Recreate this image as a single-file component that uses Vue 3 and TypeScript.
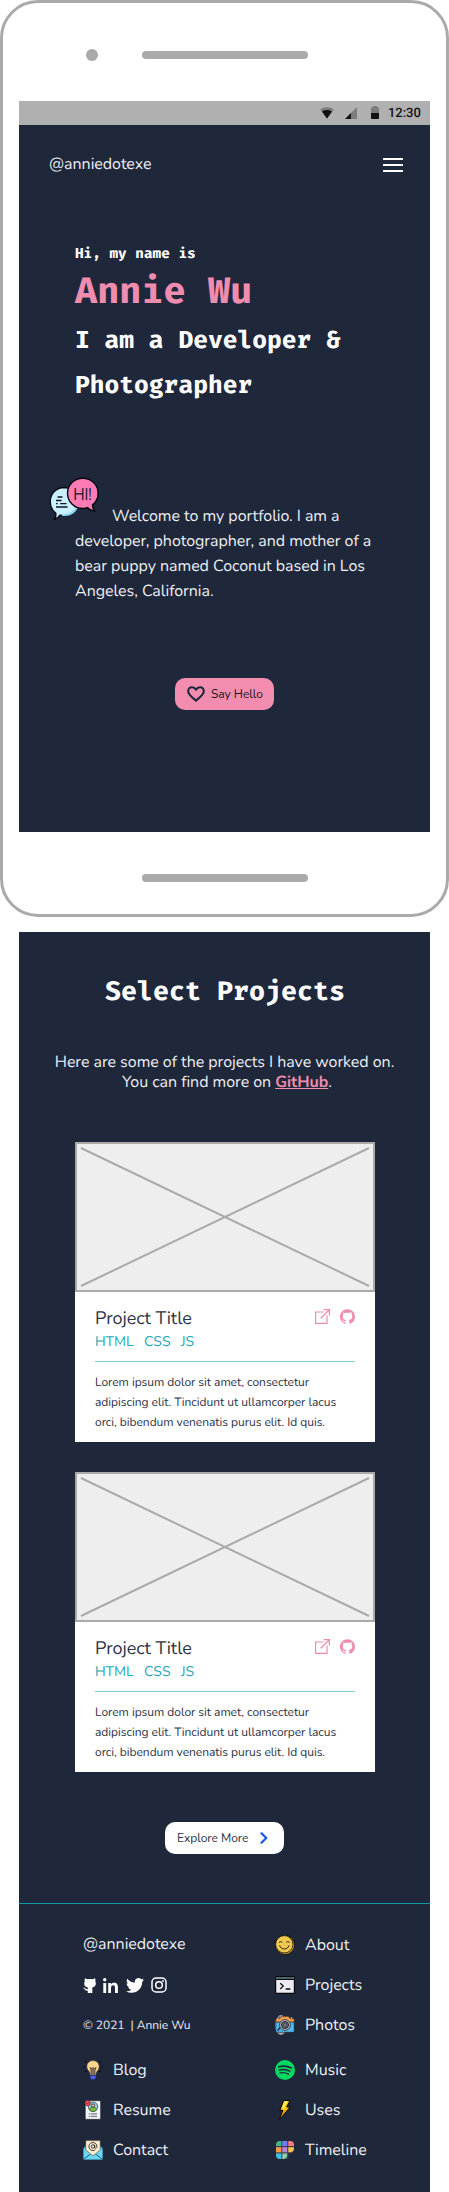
<script setup lang="ts">
interface Project {
  id: number
  title: string
  tags: string[]
  lines: string[]
}

interface FooterLink {
  label: string
  icon: string
}

const lorem = [
  'Lorem ipsum dolor sit amet, consectetur',
  'adipiscing elit. Tincidunt ut ullamcorper lacus',
  'orci, bibendum venenatis purus elit. Id quis.',
]

const projects: Project[] = [1, 2].map((id) => ({
  id,
  title: 'Project Title',
  tags: ['HTML', 'CSS', 'JS'],
  lines: lorem,
}))

const leftLinks: FooterLink[] = [
  { label: 'Blog', icon: 'bulb' },
  { label: 'Resume', icon: 'resume' },
  { label: 'Contact', icon: 'mail' },
]

const rightLinks: FooterLink[] = [
  { label: 'About', icon: 'smile' },
  { label: 'Projects', icon: 'terminal' },
  { label: 'Photos', icon: 'camera' },
  { label: 'Music', icon: 'spotify' },
  { label: 'Uses', icon: 'bolt' },
  { label: 'Timeline', icon: 'grid' },
]

const hour = '12:30'
</script>

<template>
  <div class="page">
    <section class="phone">
      <div class="phone-top">
        <span class="camera"></span>
        <span class="speaker"></span>
      </div>

      <div class="screen">
        <div class="status">
          <svg class="wifi" width="14" height="12" viewBox="0 0 14 12">
            <path d="M0.3 2.6C2.2 1 4.500 .2 7 .2s4.800.8 6.700 2.400L7 11.500z" fill="#7c7c7c" />
            <path d="M1.900 4.600C3.300 3.500 5 2.900 7 2.900s3.700.6 5.100 1.700L7 11.500z" fill="#111" />
          </svg>
          <svg class="signal" width="12" height="12" viewBox="0 0 12 12">
            <path d="M12 0v12H0z" fill="#7c7c7c" />
            <path d="M6 6v6H0z" fill="#111" />
          </svg>
          <svg class="battery" width="8" height="13" viewBox="0 0 8 13">
            <path d="M2 0h4v1.200h2V7H0V1.200h2z" fill="#7c7c7c" />
            <path d="M0 7h8v5.200a.8.8 0 0 1-.8.8H.8a.8.8 0 0 1-.8-.8z" fill="#111" />
          </svg>
          <span class="clock">{{ hour }}</span>
        </div>

        <header class="nav">
          <span class="handle">@anniedotexe</span>
          <span class="burger"><i></i><i></i><i></i></span>
        </header>

        <div class="hero">
          <p class="hi">Hi, my name is</p>
          <h1 class="name">Annie Wu</h1>
          <p class="role">I am a Developer &amp;<br />Photographer</p>

          <div class="intro">
            <svg class="bubbles" width="52" height="48" viewBox="0 0 52 48">
              <path
                d="M16 12.500a14 14 0 0 1 13.800 14.300c0 8-6.400 13.700-14.300 13.700-1.200 0-2.400-.1-3.500-.5-1.300 2-3 3.300-5.300 4.200 1.100-1.800 1.500-3.700 1.100-6A14 14 0 0 1 2.300 26.500C2.300 18.800 8.300 12.500 16 12.500z"
                fill="#c9f0ff" stroke="#06070c" stroke-width="1.300" />
              <path d="M14 39.700c8.500 1.200 14.500-3.500 15.700-10.200" fill="none" stroke="#8fdcf5" stroke-width="2" />
              <path d="M9.500 22h5M8 25.500h5.500M8 28.700h1.800M12.200 28.700h6.300M8 32h11.500" stroke="#11151f" stroke-width="1.300" fill="none" />
              <path
                d="M34.800 3.200c8.500 0 15.300 6.700 15.300 15.100 0 4.800-2.100 8.900-5.500 11.600-.1 2.500.6 4.400 2.100 6-3.100-.2-5.300-1.300-7-3.200-1.500.6-3.100.8-4.900.8-8.500 0-15.300-6.800-15.300-15.200S26.300 3.200 34.800 3.200z"
                fill="#ff7bb6" stroke="#06070c" stroke-width="1.400" />
              <text x="25.200" y="24.600" textLength="18.500" lengthAdjust="spacingAndGlyphs" class="hi-text">HI!</text>
            </svg>
            <p class="welcome">
              Welcome to my portfolio. I am a<br />developer, photographer, and mother of a<br />bear puppy named Coconut based in Los<br />Angeles, California.
            </p>
          </div>
        </div>

        <button class="say">
          <svg width="18" height="16" viewBox="0 0 18 16">
            <path
              d="M9 14.600C5.500 11.700 1.200 8.600 1.200 5.200 1.200 2.900 2.900 1.200 5 1.200c1.700 0 3.100.9 4 2.400.9-1.500 2.300-2.400 4-2.400 2.100 0 3.800 1.700 3.800 4 0 3.400-4.300 6.500-7.800 9.400z"
              fill="none" stroke="#1f273b" stroke-width="2.100" stroke-linejoin="round" />
          </svg>
          <span>Say Hello</span>
        </button>
      </div>

      <div class="phone-bottom">
        <span class="speaker"></span>
      </div>
    </section>

    <section class="work">
      <h2>Select Projects</h2>
      <p class="lead">
        Here are some of the projects I have worked on.<br /><span>You can find more on <a>GitHub</a>.</span>
      </p>

      <div class="cards">
        <article v-for="p in projects" :key="p.id" class="card">
          <svg class="thumb" width="300" height="150" viewBox="0 0 300 150">
            <rect x="1" y="1" width="298" height="148" fill="#eee" stroke="#aaa" stroke-width="2" />
            <path d="M6 6l288 138M294 6L6 144" stroke="#aaa" stroke-width="2" />
          </svg>
          <div class="body">
            <div class="card-head">
              <h3>{{ p.title }}</h3>
              <div class="card-icons">
                <svg width="15" height="15" viewBox="0 0 15 15" fill="none" stroke="#f08cae">
                  <path d="M8.500 3H.6v11.400H12V6.500" stroke-width="1.200" />
                  <path d="M5.700 9.300L13.800 1.200M8.500.6h5.900v5.900" stroke-width="1.300" />
                </svg>
                <svg width="15" height="15" viewBox="0 0 24 24" fill="#f08cae">
                  <path
                    d="M12 .297c-6.630 0-12 5.373-12 12 0 5.303 3.438 9.800 8.205 11.385.6.113.82-.258.82-.577 0-.285-.01-1.040-.015-2.040-3.338.724-4.042-1.610-4.042-1.610C4.422 18.070 3.633 17.700 3.633 17.700c-1.087-.744.084-.729.084-.729 1.205.084 1.838 1.236 1.838 1.236 1.070 1.835 2.809 1.305 3.495.998.108-.776.417-1.305.76-1.605-2.665-.3-5.466-1.332-5.466-5.930 0-1.310.465-2.380 1.235-3.220-.135-.303-.54-1.523.105-3.176 0 0 1.005-.322 3.300 1.230.96-.267 1.980-.399 3-.405 1.020.006 2.040.138 3 .405 2.280-1.552 3.285-1.230 3.285-1.230.645 1.653.24 2.873.12 3.176.765.84 1.230 1.910 1.230 3.220 0 4.610-2.805 5.625-5.475 5.920.42.36.81 1.096.81 2.220 0 1.606-.015 2.896-.015 3.286 0 .315.21.69.825.57C20.565 22.092 24 17.592 24 12.297c0-6.627-5.373-12-12-12" />
                </svg>
              </div>
            </div>
            <div class="tags"><span v-for="t in p.tags" :key="t">{{ t }}</span></div>
            <hr />
            <p><template v-for="(l, i) in p.lines" :key="i">{{ l }}<br /></template></p>
          </div>
        </article>
      </div>

      <button class="explore">
        <span>Explore More</span>
        <svg width="8" height="12" viewBox="0 0 8 12">
          <path d="M1.500 1.300L6.300 6 1.500 10.700" fill="none" stroke="#1354f5" stroke-width="2.200" stroke-linecap="round" stroke-linejoin="round" />
        </svg>
      </button>

      <footer>
        <div class="col left">
          <div class="row account">@anniedotexe</div>
          <div class="row social">
            <svg width="13" height="15" viewBox="0 0 13 15" fill="#fff">
              <path d="M2.100.2L4.300 1.300Q7 .8 9.700 1.300L12 .2Q12.700 1.800 12.300 3.400 13.300 5 12.500 7.200 11.700 9.100 9.300 9.500V15H4.800v-2.200Q2.500 13 1.700 11.300 1.100 10.200.1 10 .8 9.200 2 10.100q.9 1.500 2.700 1.200l.1-1.800Q2.200 9 1.500 7.200.8 5 1.800 3.400 1.400 1.800 2.100.2z" />
            </svg>
            <svg width="15" height="15" viewBox="0 0 15 15" fill="#fff">
              <circle cx="1.700" cy="1.700" r="1.700" />
              <path d="M.3 5h2.900v10H.3zM5.200 5h2.700v1.400C8.500 5.300 9.500 4.700 11 4.700c3 0 3.900 1.800 3.900 4.600V15H12v-5c0-1.700-.3-2.800-1.800-2.800S8 8.400 8 10v5H5.200z" />
            </svg>
            <svg width="18" height="15" viewBox="0 2.150 24 19.700" fill="#fff">
              <path
                d="M23.953 4.570a10 10 0 0 1-2.825.775 4.958 4.958 0 0 0 2.163-2.723c-.951.555-2.005.959-3.127 1.184a4.920 4.920 0 0 0-8.384 4.482C7.690 8.095 4.067 6.130 1.640 3.162a4.822 4.822 0 0 0-.666 2.475c0 1.710.87 3.213 2.188 4.096a4.904 4.904 0 0 1-2.228-.616v.060a4.923 4.923 0 0 0 3.946 4.827 4.996 4.996 0 0 1-2.212.085 4.936 4.936 0 0 0 4.604 3.417 9.867 9.867 0 0 1-6.102 2.105c-.39 0-.779-.023-1.170-.067a13.995 13.995 0 0 0 7.557 2.209c9.053 0 13.998-7.496 13.998-13.985 0-.21 0-.42-.015-.63A9.935 9.935 0 0 0 24 4.590z" />
            </svg>
            <svg width="16" height="16" viewBox="0 0 16 16" fill="none" stroke="#fff">
              <rect x="1" y="1" width="14" height="14" rx="4" stroke-width="1.500" />
              <circle cx="8" cy="8" r="3.300" stroke-width="1.500" />
              <circle cx="12" cy="4" r=".9" fill="#fff" stroke="none" />
            </svg>
          </div>
          <div class="row small">© 2021 &nbsp;| Annie Wu</div>
          <div v-for="l in leftLinks" :key="l.label" class="row link" :class="l.icon">
            <svg v-if="l.icon === 'bulb'" width="20" height="20" viewBox="0 0 20 20">
              <path d="M.4 6.800h1.400M18.200 6.800h1.400M2.200 1.700l1.200.9M17.800 1.700l-1.200.9M2.200 11.900l1.200-.9M17.800 11.900l-1.200-.9" stroke="#06070c" stroke-width="1.300" />
              <path d="M10 .6c3.500 0 6.200 2.600 6.200 6 0 2.400-1.200 3.600-2.200 5-.7 1-.9 2.300-.9 3.900H7c0-1.600-.2-2.900-.9-3.900-1-1.400-2.300-2.600-2.300-5 0-3.400 2.700-6 6.200-6z" fill="#fcd68e" stroke="#352b29" stroke-width=".6" />
              <path d="M7 7.200l1.500 1.500L10 7.500l1.500 1.200L13 7.200l-1 3.300v5H8v-5z" fill="#8a6f5c" stroke="#3d3533" stroke-width=".7" />
              <path d="M7.200 15.500h5.700v2.400l-1.300 1.500H8.500l-1.300-1.500z" fill="#4a63e8" stroke="#20286c" stroke-width=".6" />
            </svg>
            <svg v-else-if="l.icon === 'resume'" width="20" height="20" viewBox="0 0 20 20">
              <path d="M2.300.7h15.300v18.600H2.300z" fill="#f4f5f8" stroke="#111" stroke-width=".5" />
              <circle cx="10" cy="6.700" r="4.700" fill="#8ad4f3" stroke="#223048" stroke-width=".7" />
              <path d="M6.500 10.200c.3-2.300 1.700-3 3.500-3s3.200.7 3.500 3c-2 1.700-5 1.700-7 0z" fill="#7bc52f" stroke="#26391b" stroke-width=".6" />
              <circle cx="10" cy="5.600" r="1.700" fill="#e8b48f" stroke="#2a211f" stroke-width=".7" />
              <circle cx="4.700" cy="3.200" r="2.700" fill="#f0535a" stroke="#6c1d2a" stroke-width=".7" />
              <path d="M3.500 3.200l.9.9 1.500-1.600" fill="none" stroke="#441119" stroke-width=".7" />
              <path d="M5.800 13.900h1.500M8 13.900h6M5.800 16.300h1.500M8 16.300h6" stroke="#555b66" stroke-width="1" />
            </svg>
            <svg v-else width="20" height="20" viewBox="0 0 20 20">
              <path d="M.5 7.800L3 5.500h14l2.500 2.300v11.600H.5z" fill="#45b8dc" stroke="#11202c" stroke-width=".5" />
              <path d="M.5 8.200L10 16.100l9.500-7.900v11.200H.5z" fill="#6bd8f5" />
              <path d="M.5 19.400L7.800 13.700M19.500 19.400l-7.300-5.700" stroke="#164a63" stroke-width=".9" fill="none" />
              <path d="M2.800 9.900V.6h14.400v9.300L10 15.900z" fill="#fdeed2" stroke="#3a322b" stroke-width=".5" />
              <circle cx="9.900" cy="6.500" r="1.700" fill="none" stroke="#222" stroke-width=".9" />
              <path d="M11.700 4.700v2.800c0 1.300 2.200 1 2.200-1a4 4 0 1 0-1.700 3.300" fill="none" stroke="#222" stroke-width=".9" />
            </svg>
            <span>{{ l.label }}</span>
          </div>
        </div>

        <div class="col right">
          <div v-for="l in rightLinks" :key="l.label" class="row link" :class="l.icon">
            <svg v-if="l.icon === 'smile'" width="20" height="20" viewBox="0 0 20 20">
              <circle cx="10" cy="10" r="9.600" fill="#c99a33" stroke="#0b0b0d" stroke-width=".8" />
              <circle cx="9.300" cy="9.300" r="8.700" fill="#efc94f" stroke="#14120c" stroke-width=".8" />
              <path d="M4.300 7.100q1.200-1.300 2.600 0M11.600 7.100q1.200-1.300 2.600 0M4.700 10.800c1.400 4.400 7.800 4.400 9.200 0" fill="none" stroke="#2b2412" stroke-width="1" stroke-linecap="round" />
            </svg>
            <svg v-else-if="l.icon === 'terminal'" width="20" height="20" viewBox="0 0 20 20">
              <rect x=".6" y="1.500" width="18.800" height="16.800" rx=".8" fill="#ebebf1" stroke="#050608" stroke-width="1.200" />
              <path d="M1.200 2h17.600v2H1.200z" fill="#4c6370" />
              <path d="M.6 4.500h18.800" stroke="#050608" stroke-width="1" />
              <path d="M5.300 8.200l2.900 2.900-2.900 2.900M10.600 14h4.800" fill="none" stroke="#0c0d10" stroke-width="1.300" />
            </svg>
            <svg v-else-if="l.icon === 'camera'" width="20" height="20" viewBox="0 0 20 20">
              <rect x=".8" y="6.800" width="18.400" height="10.500" rx=".7" fill="#53b9ea" stroke="#10202c" stroke-width=".6" />
              <path d="M.8 7V3.500h4.200L6.500 1.300h7L15 3.500h4.200V7z" fill="#f59b4c" stroke="#2a1c12" stroke-width=".6" />
              <path d="M2 3.500V1.900h2.300v1.600M15.300 3.500V1.900h2.300v1.600" stroke="#1b2130" stroke-width=".7" fill="#ccd3da" />
              <circle cx="10" cy="10" r="5.400" fill="#b9bfc8" stroke="#1f2733" stroke-width=".8" />
              <circle cx="10" cy="10" r="3.500" fill="#626a78" stroke="#1d2430" stroke-width="1" />
              <circle cx="10" cy="10" r="1.300" fill="#a5acb8" stroke="#1d2430" stroke-width=".6" />
              <path d="M5.200 12.500L2.600 15.800" stroke="#172b3c" stroke-width="1.300" />
            </svg>
            <svg v-else-if="l.icon === 'spotify'" width="20" height="20" viewBox="0 0 20 20">
              <circle cx="10" cy="10" r="10" fill="#00d95f" />
              <g fill="none" stroke="#1f273b" stroke-linecap="round">
                <path d="M3.900 6.800c4.200-1.200 8.800-.8 12.400 1.300" stroke-width="1.700" />
                <path d="M4.300 10c3.700-1 7.400-.6 10.600 1.200" stroke-width="1.400" />
                <path d="M4.700 13c3.200-.7 6.100-.4 8.900 1.100" stroke-width="1.200" />
              </g>
            </svg>
            <svg v-else-if="l.icon === 'bolt'" width="20" height="20" viewBox="0 0 20 20">
              <path d="M8.700.5h6.200L11.700 7H15L4.400 19.500 8 10.400H4.900z" fill="#ffc90a" stroke="#080808" stroke-width="1" stroke-linejoin="round" />
              <path d="M9.700 1.300h2.700L8.700 8.200H6.500z" fill="#fff06a" />
              <path d="M13.700 7.700L5.500 17.800l3.700-6.200z" fill="#f28a14" />
            </svg>
            <svg v-else width="20" height="20" viewBox="0 0 20 20">
              <rect x="1" y="1" width="18" height="12.500" rx="4" fill="#4b3a4d" />
              <path d="M1 6h12.500v13H5a4 4 0 0 1-4-4z" fill="#3b4351" />
              <path d="M5 1h1.300v5H1V5a4 4 0 0 1 4-4z" fill="#43b883" />
              <path d="M7.300 1h4.900v5H7.300z" fill="#6b7cff" />
              <path d="M13.300 1H15a4 4 0 0 1 4 4v1h-5.700z" fill="#ff7a80" />
              <path d="M1 7.200h5.300v5.100H1z" fill="#fb9a45" />
              <path d="M7.300 7.200h4.900v5.100H7.300z" fill="#bd83d8" />
              <path d="M13.300 7.200H19v1.300a4 4 0 0 1-4 3.800h-1.700z" fill="#f7c64a" />
              <path d="M1 13.500h5.300V19H5a4 4 0 0 1-4-4z" fill="#3cc4e6" />
              <path d="M7.300 13.500h4.900V15a4 4 0 0 1-3.500 4H7.300z" fill="#8bd3ae" />
            </svg>
            <span>{{ l.label }}</span>
          </div>
        </div>
      </footer>
    </section>
  </div>
</template>

<style>
body {
  background: #fff;
}
</style>

<style scoped>
* {
  box-sizing: border-box;
}

.page {
  width: 449px;
  height: 2192px;
  overflow: hidden;
  font-family: Nunito, Lato, sans-serif;
  font-size: 16px;
  font-weight: 400;
  line-height: 20px;
  letter-spacing: -0.035px;
  text-rendering: geometricPrecision;
  color: #eceef2;
}

p,
h1,
h2,
h3 {
  margin: 0;
}

svg {
  display: block;
  flex: none;
}

button {
  display: flex;
  align-items: center;
  border: 0;
  height: 32px;
  border-radius: 10px;
  font: 400 12px/20px Nunito, Lato, sans-serif;
  letter-spacing: -0.03px;
}

/* Phone frame */
.phone {
  display: flex;
  flex-direction: column;
  height: 917px;
  border: 3px solid #aaa;
  border-radius: 38px;
  padding: 0 16px;
  background: #fff;
}

.phone-top {
  display: flex;
  align-items: center;
  height: 98px;
  padding: 6px 0 0 67px;
}

.camera {
  width: 12px;
  height: 12px;
  border-radius: 50%;
  background: #aaa;
}

.speaker {
  width: 166px;
  height: 8px;
  border-radius: 4px;
  background: #aaa;
}

.camera + .speaker {
  margin-left: 44px;
}

.phone-bottom {
  padding: 42px 0 0 123px;
}

.phone-bottom .speaker {
  display: block;
}

.screen {
  height: 731px;
  background: #1f273b;
}

.status {
  display: flex;
  align-items: center;
  justify-content: flex-end;
  height: 24px;
  padding-right: 9px;
  background: #b0b0b0;
}

.signal {
  margin-left: 11px;
}

.battery {
  margin: 0 9px 1px 14px;
}

.clock {
  width: 33px;
  padding-top: 1px;
  font: 500 13px/20px Roboto, sans-serif;
  color: #111;
}

.nav {
  display: flex;
  justify-content: space-between;
  align-items: center;
  height: 80px;
  padding: 0 27px 0 30px;
}

.handle {
  padding-bottom: 2px;
}

.burger {
  display: flex;
  flex-direction: column;
  gap: 4px;
  width: 20px;
}

.burger i {
  height: 2px;
  background: #fff;
  border-radius: 0.5px;
}

.hero {
  padding: 40px 0 0 56px;
  font-family: 'Fira Code', 'DejaVu Sans Mono', monospace;
  font-weight: 700;
  letter-spacing: 0;
  color: #fff;
}

.hi {
  font-size: 14px;
  line-height: 20px;
}

.name {
  margin: 6px 0 3px;
  font-size: 36px;
  line-height: 45px;
  font-weight: 700;
  color: #f08cae;
}

.role {
  font-size: 24px;
  line-height: 45px;
}

.intro {
  position: relative;
  margin-top: 95px;
  font: 400 16px/25px Nunito, Lato, sans-serif;
  letter-spacing: -0.035px;
  color: #eceef2;
}

.bubbles {
  position: absolute;
  left: -27px;
  top: -29px;
}

.hi-text {
  font: 400 17px Nunito, Lato, sans-serif;
  fill: #11151f;
}

.welcome {
  text-indent: 37px;
  white-space: nowrap;
}

.say {
  width: 99px;
  margin: 74px 0 0 156px;
  padding: 0 0 0 12px;
  gap: 6px;
  background: #f28db0;
  color: #1c1820;
}

/* Projects */
.work {
  display: flex;
  flex-direction: column;
  align-items: center;
  width: 411px;
  height: 1260px;
  margin: 15px 0 0 19px;
  padding-top: 40px;
  background: #1f273b;
}

h2 {
  padding-left: 1px;
  font: 700 26px/40px 'Fira Code', 'DejaVu Sans Mono', monospace;
  letter-spacing: 0;
  color: #fff;
}

.lead {
  margin-top: 40px;
  text-align: center;
  white-space: nowrap;
}

.lead span {
  margin-left: 5px;
}

.lead a {
  font-weight: 700;
  color: #f08cae;
  text-decoration: underline;
}

.cards {
  display: flex;
  flex-direction: column;
  gap: 30px;
  margin-top: 50px;
}

.card {
  width: 300px;
  height: 300px;
  background: #fff;
  color: #2b3347;
}

.body {
  padding: 14px 20px 0;
}

.body h3,
.body p,
.tags {
  padding-left: 0.5px;
}

.card-head {
  display: flex;
  justify-content: space-between;
}

h3 {
  padding-top: 1px;
  font-size: 18px;
  font-weight: 400;
  line-height: 24px;
}

.card-icons {
  display: flex;
  gap: 10px;
  margin-top: 3px;
}

.tags {
  display: flex;
  gap: 10.6px;
  margin-top: 1px;
  font-size: 14px;
  color: #22a8b1;
}

hr {
  height: 1px;
  margin: 9px 0 11px;
  border: 0;
  background: #7fcfcf;
}

.body p {
  font-size: 12px;
  white-space: nowrap;
}

.explore {
  width: 119px;
  margin-top: 50px;
  padding: 0 0 0 12px;
  gap: 12px;
  background: #fff;
  color: #2b3347;
}

/* Footer */
footer {
  display: flex;
  gap: 42px;
  align-self: stretch;
  margin-top: 49px;
  padding: 31px 0 0 64px;
  border-top: 1px solid #0d9aa3;
}

.col {
  display: flex;
  flex-direction: column;
  gap: 20px;
  width: 150px;
}

.row {
  display: flex;
  align-items: center;
  height: 20px;
}

.account {
  padding-bottom: 2px;
}

.link {
  gap: 10px;
}

.bulb,
.spotify {
  margin-top: 5px;
}

.small {
  padding-top: 1px;
  font-size: 12px;
}

.social svg:nth-child(2) {
  margin-left: 7px;
}

.social svg:nth-child(3) {
  margin-left: 8px;
}

.social svg:nth-child(4) {
  margin-left: 7px;
}
</style>
